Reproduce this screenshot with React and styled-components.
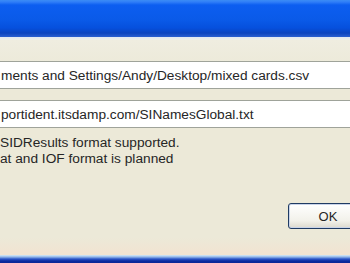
import React from "react";
import styled, { createGlobalStyle } from "styled-components";

const GlobalStyle = createGlobalStyle`
  html, body {
    margin: 0;
    padding: 0;
    overflow: hidden;
    background: #ece9d8;
  }
`;

const Window = styled.div`
  width: 350px;
  height: 263px;
  display: flex;
  flex-direction: column;
  overflow: hidden;
  font-family: "Liberation Sans", Tahoma, sans-serif;
  font-size: 13.7px;
  color: #262626;
`;

const TitleBar = styled.div`
  height: 37px;
  flex-shrink: 0;
  background: linear-gradient(
    to bottom,
    #3b8cf5 0px,
    #2f7ef8 2px,
    #0c5ef0 5px,
    #0a5ae8 20px,
    #0650dd 28px,
    #0a43bf 33px,
    #2a5fd0 37px
  );
`;

const TitleEdge = styled.div`
  height: 3px;
  flex-shrink: 0;
  background: linear-gradient(to bottom, #dfe8f4, #f0efe4);
`;

const Body = styled.div`
  flex: 1;
  display: flex;
  flex-direction: column;
  padding-top: 21px;
  background: linear-gradient(
    to bottom,
    #efede0 0px,
    #ece9d8 30px,
    #ece9d8 198px,
    #f1e4d2 212px
  );
`;

const Field = styled.div`
  height: 26px;
  margin-left: -12px;
  margin-right: -20px;
  margin-bottom: ${(p) => p.$gap}px;
  border: 1px solid #9fa39a;
  background: #fff;
  display: flex;
  align-items: center;
  padding-left: 12px;
  white-space: nowrap;
  overflow: hidden;
`;

const Message = styled.div`
  line-height: 16px;
  white-space: nowrap;
`;

const ButtonRow = styled.div`
  display: flex;
  justify-content: flex-end;
  margin-top: auto;
  margin-bottom: 26px;
  margin-right: -16px;
`;

const Button = styled.button`
  width: 78px;
  height: 26px;
  border: 1px solid #1f3b63;
  border-radius: 3px;
  background: linear-gradient(to bottom, #ffffff, #f2f1ea 70%, #dcd9cd);
  box-shadow: inset 0 0 0 1px #c9d4e9;
  font-family: inherit;
  font-size: 13px;
  color: #262626;
  padding: 0 0 0 2px;
`;

const BottomFrame = styled.div`
  height: 8px;
  flex-shrink: 0;
  background: linear-gradient(
    to bottom,
    #d9ecf7 0px,
    #8fb4e8 2px,
    #2b55c8 4px,
    #0b2a9f 6px,
    #0a2696 8px
  );
`;

export default function App() {
  return (
    <Window>
      <GlobalStyle />
      <TitleBar />
      <TitleEdge />
      <Body>
        <Field $gap={11}>ments and Settings/Andy/Desktop/mixed cards.csv</Field>
        <Field $gap={7}>portident.itsdamp.com/SINamesGlobal.txt</Field>
        <Message>
          SIDResults format supported.
          <br />
          at and IOF format is planned
        </Message>
        <ButtonRow>
          <Button>OK</Button>
        </ButtonRow>
      </Body>
      <BottomFrame />
    </Window>
  );
}
